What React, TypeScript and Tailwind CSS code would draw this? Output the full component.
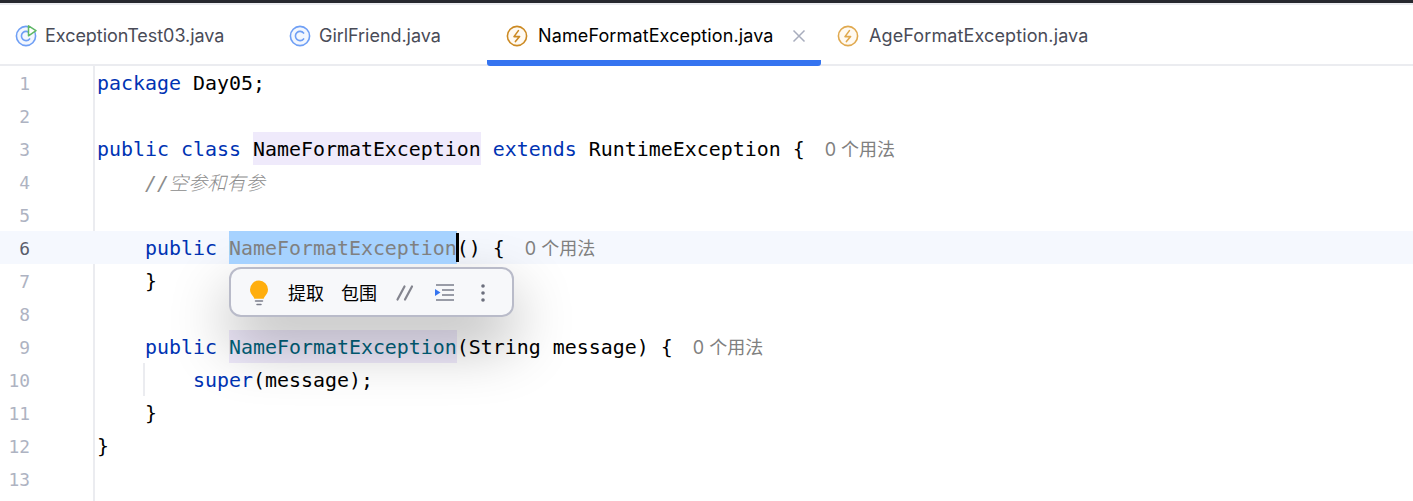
const mono = "font-['DejaVu_Sans_Mono','Liberation_Mono',monospace]";
const ui = "font-['Inter','Noto_Sans_CJK_SC',sans-serif]";

function Kw({ children }: { children: React.ReactNode }) {
  return <span className="text-[#0033b3]">{children}</span>;
}

function Hint({ children }: { children: React.ReactNode }) {
  return (
    <span className={`${ui} ml-[20px] text-[18px] text-[#808080]`}>{children}</span>
  );
}

function ClassIcon({ run }: { run?: boolean }) {
  return (
    <svg width="22" height="22" viewBox="0 0 22 22" fill="none" className="shrink-0">
      <circle cx="11" cy="11" r="9.6" stroke="#6f9ff5" strokeWidth="1.6" fill="#f3f7fe" />
      <path d="M14.6 8.1a4.6 4.6 0 1 0 0 5.8" stroke="#6f9ff5" strokeWidth="1.6" strokeLinecap="round" />
      {run && <path d="M13.5 0.8 21 5.6 13.5 10.8Z" fill="#fff" stroke="#5fb865" strokeWidth="1.5" strokeLinejoin="round" />}
    </svg>
  );
}

function ExcIcon({ faded }: { faded?: boolean }) {
  const c = faded ? "#e0a94f" : "#cc8a23";
  return (
    <svg width="22" height="22" viewBox="0 0 22 22" fill="none" className="shrink-0">
      <circle cx="11" cy="11" r="9.6" stroke={c} strokeWidth="1.6" fill="#fffaf2" />
      <path d="M12.4 5.6 8 11.6h5.6L9.4 16.6" stroke={c} strokeWidth="1.6" strokeLinecap="round" strokeLinejoin="round" />
    </svg>
  );
}

function Toolbar() {
  return (
    <div className="absolute left-[229px] top-[201px] flex h-[50px] w-[285px] items-center rounded-[12px] border-2 border-[#b9bbc9] bg-[#f7f8fa] shadow-[0_26px_60px_rgba(0,0,0,0.3)]">
      <svg width="20" height="26" viewBox="0 0 20 26" className="ml-[18px] mt-[1px] shrink-0">
        <path d="M10 0.5a9 9 0 0 0-9 9c0 3.2 1.7 5.2 3.2 7 .7.8 1 1.5 1.1 2.2h9.4c.1-.7.4-1.4 1.100-2.200 1.500-1.800 3.200-3.800 3.200-7a9 9 0 0 0-9-9Z" fill="#ffae0d" />
        <path d="M6.500 21h7M8 24.500h4" stroke="#7b7e8c" strokeWidth="1.500" strokeLinecap="round" />
      </svg>
      <span className={`${ui} ml-[19px] pt-[4px] text-[18px] leading-none text-black`}>提取</span>
      <span className={`${ui} ml-[17px] pt-[4px] text-[18px] leading-none text-black`}>包围</span>
      <svg width="18" height="16" viewBox="0 0 18 16" fill="none" className="ml-[19px] mt-[1px] shrink-0">
        <path d="M1.500 14.500 8.500 1.500M9 14.500 16 1.500" stroke="#84858f" strokeWidth="2.200" strokeLinecap="round" />
      </svg>
      <svg width="19" height="17" viewBox="0 0 19 17" fill="none" className="ml-[21px] mt-[1px] shrink-0">
        <path d="M1 1h18M7 6h12M7 11h12M1 16h18" stroke="#7b7e8c" strokeWidth="1.500" />
        <path d="M0 5 5.500 8.500 0 12Z" fill="#3574f0" />
      </svg>
      <svg width="4" height="18" viewBox="0 0 4 18" className="ml-[27px] mt-[1px] shrink-0">
        <circle cx="2" cy="2" r="1.800" fill="#6c6f7d" />
        <circle cx="2" cy="9" r="1.800" fill="#6c6f7d" />
        <circle cx="2" cy="16" r="1.800" fill="#6c6f7d" />
      </svg>
    </div>
  );
}

const lines: React.ReactNode[] = [
  <>
    <Kw>package</Kw> Day05;
  </>,
  <></>,
  <>
    <Kw>public class</Kw> <span className="inline-block h-[33px] bg-[#efeafb] align-top">NameFormatException</span> <Kw>extends</Kw> RuntimeException {"{"}
    <Hint>0 个用法</Hint>
  </>,
  <>
    {"    "}
    <span className="italic text-[#8c8c8c]">
      //<span className="font-['Noto_Sans_CJK_SC',sans-serif] text-[19.2px] font-light">空参和有参</span>
    </span>
  </>,
  <></>,
  <>
    {"    "}
    <Kw>public</Kw> <span className="relative z-10 inline-block h-[33px] bg-[#a6d2ff] align-top text-[#808080]">NameFormatException</span>
    <span className="relative z-10 inline-block h-[33px] w-0 align-top">
      <span className="absolute left-[-1px] top-[2px] h-[29px] w-[3px] bg-black" />
    </span>
    () {"{"}
    <Hint>0 个用法</Hint>
  </>,
  <>{"    }"}</>,
  <></>,
  <>
    {"    "}
    <Kw>public</Kw> <span className="inline-block h-[33px] bg-[#efeafb] align-top text-[#00627a]">NameFormatException</span>(String message) {"{"}
    <Hint>0 个用法</Hint>
  </>,
  <>
    {"        "}
    <Kw>super</Kw>(message);
  </>,
  <>{"    }"}</>,
  <>{"}"}</>,
  <></>,
];

const tabs = [
  { name: "ExceptionTest03.java", icon: <ClassIcon run />, w: "w-[289px]", pad: "pl-[15px]" },
  { name: "GirlFriend.java", icon: <ClassIcon />, w: "w-[198px]", pad: "pl-[0px]" },
];

export default function App() {
  return (
    <div className="flex h-[501px] w-[1413px] flex-col overflow-hidden bg-white">
      <div className="h-[3px] bg-[#26282e]" />
      <div className="h-[2px] bg-[#ebecf0]" />
      <div className={`${ui} flex h-[61px] shrink-0 border-b-2 border-[#ebecf0] text-[18px] text-[#494b57]`}>
        {tabs.map((t) => (
          <div key={t.name} className={`flex items-center gap-[8px] pt-[2px] ${t.w} ${t.pad}`}>
            {t.icon}
            <span className="tracking-[-0.04px]">{t.name}</span>
          </div>
        ))}
        <div className="flex h-[61px] w-[334px] shrink-0 items-center gap-[10px] rounded-b-[3px] border-b-[6px] border-[#3574f0] pl-[19px] pt-[6px] text-black">
          <ExcIcon />
          <span className="tracking-[0.12px]">NameFormatException.java</span>
          <svg width="14" height="14" viewBox="0 0 14 14" fill="none" className="ml-[8px]">
            <path d="M1.500 1.500l11 11M12.500 1.500l-11 11" stroke="#a8adbd" strokeWidth="1.500" />
          </svg>
        </div>
        <div className="ml-[16px] flex items-center gap-[10px] pt-[2px]">
          <ExcIcon faded />
          <span className="tracking-[0.12px]">AgeFormatException.java</span>
        </div>
      </div>
      <div className="relative flex flex-1">
        <div className={`${mono} w-[95px] shrink-0 border-r-2 border-[#ebecf0] pr-[63px] text-right text-[17.9px] leading-[35px] text-[#aeb3c2]`}>
          {lines.map((_, i) => (
            <div key={i} className={i === 5 ? "mr-[-65px] h-[33px] bg-[#f5f8fe] pr-[65px] text-[#5a5d6b]" : "h-[33px]"}>
              {i + 1}
            </div>
          ))}
        </div>
        <div className={`${mono} flex-1 text-[19.93px] leading-[35px] whitespace-pre text-black`}>
          {lines.map((l, i) => (
            <div key={i} className={i === 5 ? "h-[33px] bg-[#f5f8fe] pl-[2px]" : "h-[33px] pl-[2px]"}>
              {l}
            </div>
          ))}
        </div>
        <div className="absolute left-[143px] top-[297px] h-[33px] w-[2px] bg-[#ebecf0]" />
        <Toolbar />
      </div>
    </div>
  );
}
